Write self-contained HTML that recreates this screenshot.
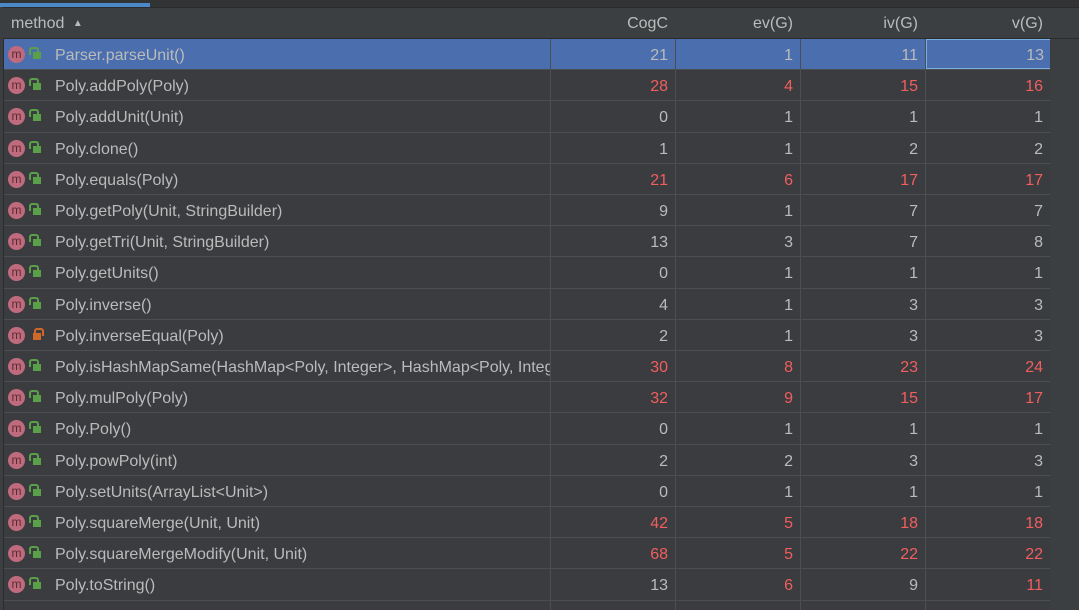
<html><head><style>
html,body{margin:0;width:1079px;height:610px;overflow:hidden}
body{background:#3c3f41;font-family:"Liberation Sans",sans-serif;font-size:16px;color:#bbbbbb;position:relative}
*{box-sizing:border-box}
.top{position:absolute;left:0;top:0;width:1079px;height:7px;background:#313335}
.tab{position:absolute;left:0;top:3px;width:150px;height:4px;background:#4a88c7}
.hdr{position:absolute;left:3px;top:7px;width:1076px;height:32px;background:#3c3f41;border-top:1px solid #2b2b2b;border-bottom:1px solid #2b2b2b}
.hdr div{position:absolute;top:7px}
.tbl{position:absolute;left:3px;top:39px;width:1047px;height:571px;background:#3a3c3f;border-left:1px solid #2b2b2b;overflow:hidden}
.r{position:absolute;left:0;width:1047px;height:31.2px;border-bottom:1px solid #4c4f52}
.c{position:absolute;top:0;height:100%;line-height:34px;text-align:right;padding-right:7px;border-right:1px solid #4c4f52}
.m{left:0;width:547px;text-align:left;padding-left:51px;white-space:nowrap;overflow:hidden}
.a{left:547px;width:125px}.b{left:672px;width:125px}.d{left:797px;width:125px}.e{left:922px;width:125px}
.red{color:#f25e5e}
.ic{position:absolute;left:4px;top:7px;width:17px;height:17px;border-radius:50%;background:#c06b7d;color:#5a2a33;font-size:12px;line-height:16px;text-align:center}
.lk{position:absolute;left:29px;top:13px;width:8px;height:7px;background:#5aa048}
.lk:before{content:"";position:absolute;left:-4px;top:-5px;width:6px;height:6px;border:2px solid #5aa048;border-bottom:none;border-radius:3px 3px 0 0}
.lk.o{background:#d0682a}.lk.o:before{left:1px;border-color:#d0682a}
.sel{background:#4b6eaf}
</style></head><body>
<div class="top"><div class="tab"></div></div>
<div class="hdr">
<div style="left:8px">method <span style="font-size:10px;position:relative;top:-2px;margin-left:4px">▲</span></div>
<div style="right:411px">CogC</div><div style="right:286px">ev(G)</div><div style="right:161px">iv(G)</div><div style="right:36px">v(G)</div>
</div>
<div class="tbl" id="t"></div>
<script>
var d=[["Parser.parseUnit()",21,1,11,13],["Poly.addPoly(Poly)",28,4,15,16],["Poly.addUnit(Unit)",0,1,1,1],["Poly.clone()",1,1,2,2],["Poly.equals(Poly)",21,6,17,17],["Poly.getPoly(Unit, StringBuilder)",9,1,7,7],["Poly.getTri(Unit, StringBuilder)",13,3,7,8],["Poly.getUnits()",0,1,1,1],["Poly.inverse()",4,1,3,3],["Poly.inverseEqual(Poly)",2,1,3,3],["Poly.isHashMapSame(HashMap&lt;Poly, Integer&gt;, HashMap&lt;Poly, Integer&gt;)",30,8,23,24],["Poly.mulPoly(Poly)",32,9,15,17],["Poly.Poly()",0,1,1,1],["Poly.powPoly(int)",2,2,3,3],["Poly.setUnits(ArrayList&lt;Unit&gt;)",0,1,1,1],["Poly.squareMerge(Unit, Unit)",42,5,18,18],["Poly.squareMergeModify(Unit, Unit)",68,5,22,22],["Poly.toString()",13,6,9,11],["",0,0,0,0]];
var lim=[15,3,10,10],h="";
d.forEach(function(r,i){
 var s=i==0?" sel":"";
 var cell=function(cls,v,k){var red=(i>0&&v>lim[k])?" red":"";return '<div class="c '+cls+red+'"'+(i==0&&cls=="e"?' style="border:1px solid #79aee0;line-height:32px;padding-right:6px"':'')+'>'+(r[0]?v:"")+'</div>';};
 h+='<div class="r'+s+'" style="top:'+(i*31.2)+'px"><div class="c m">'+(r[0]?'<span class="ic">m</span><span class="lk'+(i==9?' o':'')+'"></span>':'')+r[0]+'</div>'+cell("a",r[1],0)+cell("b",r[2],1)+cell("d",r[3],2)+cell("e",r[4],3)+'</div>';
});
document.getElementById("t").innerHTML=h;
</script>
</body></html>
